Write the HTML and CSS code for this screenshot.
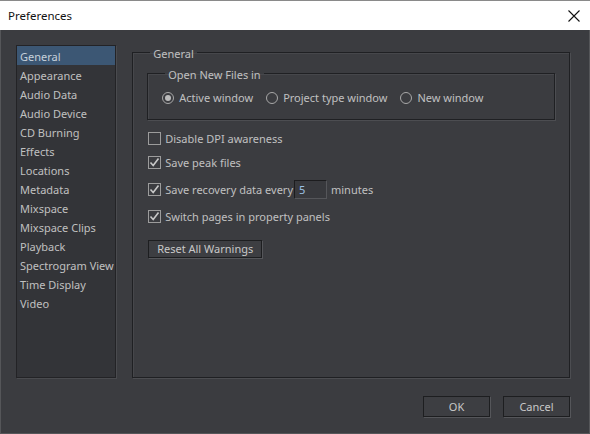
FILE: index.html
```html
<!DOCTYPE html>
<html>
<head>
<meta charset="utf-8">
<link rel="stylesheet" href="styles.css">
</head>
<body>
<div class="window">
  <div class="titlebar">
    <span class="title">Preferences</span>
    <svg class="close" width="12" height="12" viewBox="0 0 12 12"><path d="M0.5 0.5 L11.5 11.5 M11.5 0.5 L0.5 11.5" stroke="#111" stroke-width="1.1" fill="none"/></svg>
  </div>
  <div class="body">
    <div class="main">
      <ul class="nav">
        <li class="sel">General</li>
        <li>Appearance</li>
        <li>Audio Data</li>
        <li>Audio Device</li>
        <li>CD Burning</li>
        <li>Effects</li>
        <li>Locations</li>
        <li>Metadata</li>
        <li>Mixspace</li>
        <li>Mixspace Clips</li>
        <li>Playback</li>
        <li>Spectrogram View</li>
        <li>Time Display</li>
        <li>Video</li>
      </ul>
      <fieldset class="group outer">
        <legend>General</legend>
        <fieldset class="group inner">
          <legend>Open New Files in</legend>
          <div class="radios">
            <label class="radio"><span class="rb on"></span>Active window</label>
            <label class="radio"><span class="rb"></span>Project type window</label>
            <label class="radio"><span class="rb"></span>New window</label>
          </div>
        </fieldset>
        <div class="checks">
          <label class="check c1"><span class="cb"></span>Disable DPI awareness</label>
          <label class="check c2"><span class="cb on"><svg width="11" height="11" viewBox="0 0 11 11"><path d="M1.5 5.5 L4.2 8.5 L9.5 1.5" stroke="#c8c8c8" stroke-width="1.6" fill="none"/></svg></span>Save peak files</label>
          <label class="check c3"><span class="cb on"><svg width="11" height="11" viewBox="0 0 11 11"><path d="M1.5 5.5 L4.2 8.5 L9.5 1.5" stroke="#c8c8c8" stroke-width="1.6" fill="none"/></svg></span>Save recovery data every <span class="spin">5</span> minutes</label>
          <label class="check c4"><span class="cb on"><svg width="11" height="11" viewBox="0 0 11 11"><path d="M1.5 5.5 L4.2 8.5 L9.5 1.5" stroke="#c8c8c8" stroke-width="1.6" fill="none"/></svg></span>Switch pages in property panels</label>
        </div>
        <button class="btn reset">Reset All Warnings</button>
      </fieldset>
    </div>
    <div class="footer">
      <button class="btn dlg">OK</button>
      <button class="btn dlg">Cancel</button>
    </div>
  </div>
</div>
</body>
</html>
```
FILE: styles.css
```css
* { box-sizing: border-box; }
html, body { margin: 0; padding: 0; }
body {
  width: 590px;
  height: 434px;
  overflow: hidden;
  font-family: "Noto Sans", "Open Sans", sans-serif;
  font-size: 11px;
  background: #3b3c40;
}
.window {
  width: 590px;
  height: 434px;
  display: flex;
  flex-direction: column;
}
.titlebar {
  height: 31px;
  background: #ffffff;
  display: flex;
  align-items: center;
  justify-content: space-between;
  padding: 0 10px 0 8px;
  border-top: 1px solid #8a8a8a;
}
.title {
  font-size: 11.5px;
  color: #111;
}
.body {
  flex: 1;
  display: flex;
  flex-direction: column;
  background: #3b3c40;
  border-left: 1px solid #555659;
  border-right: 1px solid #555659;
  border-bottom: 1px solid #555659;
  padding: 15px 19px 16px 15px;
  color: #c0c0c0;
}
.main {
  display: flex;
  gap: 16px;
  height: 333px;
}
.nav {
  list-style: none;
  margin: 0;
  padding: 0;
  width: 101px;
  height: 333px;
  background: #333438;
  border: 1px solid #232326;
  box-shadow: 1px 1px 0 #4a4b4f;
}
.nav li {
  height: 19px;
  line-height: 19px;
  padding: 1px 0 0 3px;
  color: #c0c0c0;
  white-space: nowrap;
}
.nav li.sel {
  background: #3c5774;
  color: #c6d0db;
}
.group {
  margin: 0;
  border: 1px solid #1f2023;
  box-shadow: 1px 1px 0 #4c4d51, inset 1px 1px 0 #46474b;
}
.group legend {
  padding: 4px 3px 0 3px;
  color: #c0c0c0;
  line-height: 16px;
}
.outer {
  width: 441px;
  height: 336px;
  margin-top: -3px;
  padding: 1px 14px 0 14px;
  display: flex;
  flex-direction: column;
}
.outer > legend { margin-left: 3px; }
.inner {
  height: 57px;
  padding: 0 10px 0 14px;
}
.inner > legend { margin-left: 3px; }
.radios {
  display: flex;
  align-items: center;
  height: 29px;
}
.radio {
  display: flex;
  align-items: center;
  margin-right: 13px;
}
.rb {
  width: 12px;
  height: 12px;
  border-radius: 50%;
  border: 1px solid #a8a8a8;
  margin-right: 5px;
  display: flex;
  align-items: center;
  justify-content: center;
}
.rb.on::after {
  content: "";
  width: 6px;
  height: 6px;
  border-radius: 50%;
  background: #bcbcbc;
}
.checks {
  display: flex;
  flex-direction: column;
  padding-top: 11px;
}
.check {
  display: flex;
  align-items: center;
  height: 14px;
  padding-left: 1px;
}
.c2 { margin-top: 10px; }
.c3 { margin-top: 13px; }
.c4 { margin-top: 13px; }
.cb {
  width: 13px;
  height: 13px;
  border: 1px solid #9c9c9c;
  margin-right: 4px;
  display: flex;
  align-items: center;
  justify-content: center;
}
.spin {
  display: inline-block;
  width: 33px;
  height: 19px;
  line-height: 17px;
  margin: 0 4px 0 1px;
  padding-left: 4px;
  border: 1px solid #1c1c1e;
  border-right-color: #55565a;
  border-bottom-color: #55565a;
  background: #38393d;
  color: #9cc0e4;
}
.btn {
  font-family: "Noto Sans", "Open Sans", sans-serif;
  font-size: 11px;
  color: #c8c8c8;
  background: #3d3e42;
  border: 1px solid #1d1e20;
  box-shadow: 1px 1px 0 #55565a;
  padding: 0;
  cursor: default;
}
.reset {
  align-self: flex-start;
  margin-top: 17px;
  margin-left: 1px;
  width: 114px;
  height: 18px;
  line-height: 16px;
}
.footer {
  display: flex;
  justify-content: flex-end;
  gap: 13px;
  margin-top: 18px;
}
.dlg {
  width: 67px;
  height: 21px;
  line-height: 19px;
}
```
